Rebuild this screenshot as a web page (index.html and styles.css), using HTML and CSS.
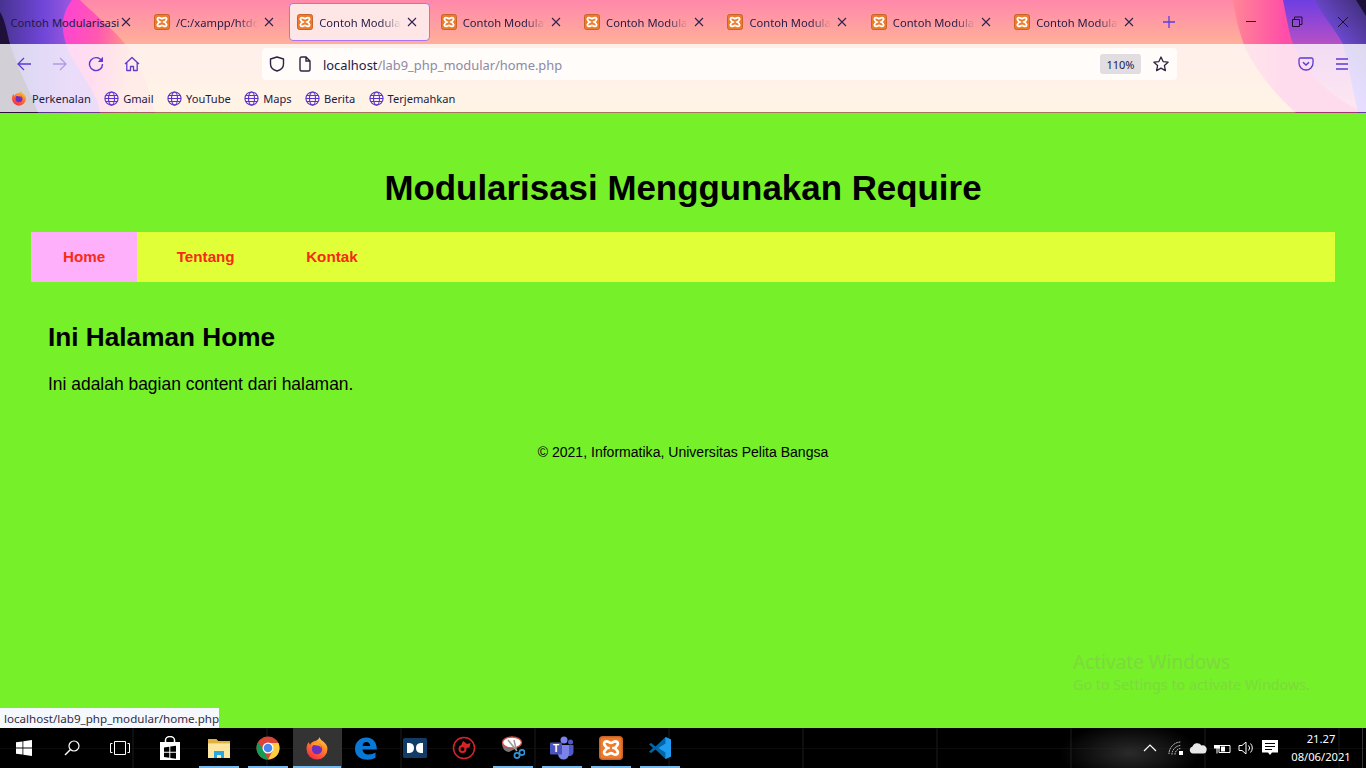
FILE: index.html
```html
<!DOCTYPE html>
<html lang="id">
<head>
<meta charset="utf-8">
<title>Contoh Modularisasi</title>
<link rel="stylesheet" href="styles.css">
</head>
<body>
<svg class="defs" width="0" height="0" aria-hidden="true">
  <defs>
    <symbol id="xampp" viewBox="0 0 16 16">
      <rect x=".5" y=".5" width="15" height="15" rx="2" fill="#ee7a2b" stroke="#c8632a"/>
      <path fill="none" stroke="#fff" stroke-width="1.800" d="M5 3.600C3.600 3.600 3 5 3.700 6 4.200 6.800 5.200 7.400 5.200 8S4.200 9.200 3.700 10C3 11 3.600 12.400 5 12.400 6.400 12.400 6.800 11.400 8 11.400s1.600 1 3 1c1.400 0 2-1.400 1.300-2.400-.5-.8-1.500-1.400-1.500-2s1-1.200 1.500-2C13 5 12.400 3.600 11 3.600 9.600 3.600 9.200 4.600 8 4.600S6.400 3.600 5 3.600Z"/>
      <path stroke="#fff" stroke-width="1.700" d="M5 8h2.200M8.800 8H11"/>
    </symbol>
    <symbol id="globe" viewBox="0 0 16 16">
      <g fill="none" stroke="#5b34d0" stroke-width="1.200">
        <circle cx="8" cy="8" r="7"/>
        <ellipse cx="8" cy="8" rx="3.200" ry="7"/>
        <path d="M1 8h14M1.800 4.800h12.400M1.800 11.200h12.400"/>
      </g>
    </symbol>
    <symbol id="close" viewBox="0 0 10 10">
      <path d="M1 1l8 8M9 1L1 9" stroke="#2c2350" stroke-width="1.100" fill="none"/>
    </symbol>
    <symbol id="firefox" viewBox="0 0 24 24">
      <defs>
        <linearGradient id="ffg" x1="0.800" y1="0" x2="0.200" y2="1">
          <stop offset="0" stop-color="#ffd23a"/>
          <stop offset=".45" stop-color="#ff7a2a"/>
          <stop offset="1" stop-color="#f0264e"/>
        </linearGradient>
      </defs>
      <path fill="url(#ffg)" d="M14.500 1c.6 2.200 2 3 3.500 4.300 2.700 2.200 4.500 4.500 4.500 7.700A10.500 10.500 0 0 1 1.500 13C1.500 9.500 2.500 7.500 4 6c0 1.200.5 2.200 1.200 2.800C6 6.500 8 5.500 10 5c2.200-.6 4-2 4.500-4Z"/>
      <circle cx="12" cy="13" r="5.200" fill="#6b2ec0"/>
      <path fill="#ff9a2e" d="M6 8c2 .5 3.500 1.500 6 1.500 3 0 4.500 2 4.500 4 .6-3.500-2-6.500-5-6.500-2 0-4 .2-5.500 1Z"/>
    </symbol>
  </defs>
</svg>

<header class="chrome">
  <svg class="chrome-art" viewBox="0 0 1366 113" width="1366" height="113" aria-hidden="true">
    <defs>
      <linearGradient id="base" x1="0" y1="0" x2="0" y2="1">
        <stop offset="0" stop-color="#ff88aa"/>
        <stop offset=".39" stop-color="#ffb09a"/>
        <stop offset="1" stop-color="#ffc47e"/>
      </linearGradient>
      <linearGradient id="lmag" gradientUnits="userSpaceOnUse" x1="60" y1="0" x2="135" y2="10">
        <stop offset="0" stop-color="#ff40d8"/>
        <stop offset=".55" stop-color="#ff58b0"/>
        <stop offset="1" stop-color="#ff9a86"/>
      </linearGradient>
      <linearGradient id="lpur" gradientUnits="userSpaceOnUse" x1="0" y1="0" x2="72" y2="0">
        <stop offset="0" stop-color="#473392"/>
        <stop offset=".6" stop-color="#7046d8"/>
        <stop offset="1" stop-color="#9a58e0"/>
      </linearGradient>
      <linearGradient id="rmag" gradientUnits="userSpaceOnUse" x1="1235" y1="0" x2="1285" y2="0">
        <stop offset="0" stop-color="#ff8496"/>
        <stop offset="1" stop-color="#ff4ea8"/>
      </linearGradient>
      <linearGradient id="rpur" gradientUnits="userSpaceOnUse" x1="0" y1="0" x2="0" y2="113">
        <stop offset="0" stop-color="#6e3ee2"/>
        <stop offset=".39" stop-color="#b650c6"/>
        <stop offset="1" stop-color="#ff88b8"/>
      </linearGradient>
      <linearGradient id="rvio" gradientUnits="userSpaceOnUse" x1="1318" y1="50" x2="1366" y2="10">
        <stop offset="0" stop-color="#8458ff"/>
        <stop offset="1" stop-color="#43307f"/>
      </linearGradient>
    </defs>
    <rect width="1366" height="113" fill="url(#base)"/>
    <path fill="url(#lmag)" d="M80 0C95 15 115 30 130 50 145 70 150 95 155 113H0V0Z"/>
    <path fill="url(#lpur)" d="M72 0C58 18 62 38 72 58 88 84 100 100 100 113H0V0Z"/>
    <path fill="#1e1038" d="M0 12C6 22 7 34 10 44 18 70 30 90 38 113H0Z"/>
    <path fill="url(#rmag)" d="M1233 0C1236 20 1240 35 1246 50 1262 80 1280 98 1296 113H1366V0Z"/>
    <path fill="url(#rpur)" d="M1283 0C1288 25 1290 40 1296 50 1312 80 1335 100 1366 113V0Z"/>
    <path fill="url(#rvio)" d="M1315 0C1322 15 1334 28 1343 44 1349 68 1354 95 1358 113H1366V0Z"/>
    <path fill="#1d1038" d="M1356 0L1366 16V0Z"/>
  </svg>

  <div class="tabs">
    <div class="tab tab-first">
      <span class="tab-title tab-title-full">Contoh Modularisasi</span>
      <svg class="tab-close"><use href="#close"/></svg>
    </div>
    <div class="tab">
      <svg class="tab-icon"><use href="#xampp"/></svg>
      <span class="tab-title">/C:/xampp/htdocs/lab9_php_modular/home.php</span>
      <svg class="tab-close"><use href="#close"/></svg>
    </div>
    <div class="tab tab-active">
      <svg class="tab-icon"><use href="#xampp"/></svg>
      <span class="tab-title">Contoh Modularisasi</span>
      <svg class="tab-close"><use href="#close"/></svg>
    </div>
    <div class="tab">
      <svg class="tab-icon"><use href="#xampp"/></svg>
      <span class="tab-title">Contoh Modularisasi</span>
      <svg class="tab-close"><use href="#close"/></svg>
    </div>
    <div class="tab">
      <svg class="tab-icon"><use href="#xampp"/></svg>
      <span class="tab-title">Contoh Modularisasi</span>
      <svg class="tab-close"><use href="#close"/></svg>
    </div>
    <div class="tab">
      <svg class="tab-icon"><use href="#xampp"/></svg>
      <span class="tab-title">Contoh Modularisasi</span>
      <svg class="tab-close"><use href="#close"/></svg>
    </div>
    <div class="tab">
      <svg class="tab-icon"><use href="#xampp"/></svg>
      <span class="tab-title">Contoh Modularisasi</span>
      <svg class="tab-close"><use href="#close"/></svg>
    </div>
    <div class="tab">
      <svg class="tab-icon"><use href="#xampp"/></svg>
      <span class="tab-title">Contoh Modularisasi</span>
      <svg class="tab-close"><use href="#close"/></svg>
    </div>
    <svg class="new-tab" viewBox="0 0 12 12"><path d="M6 0v12M0 6h12" stroke="#5a3fe0" stroke-width="1.300" fill="none"/></svg>
    <div class="win-controls">
      <svg class="win-btn" viewBox="0 0 46 44"><path d="M18 21.500h10" stroke="#1c1230" stroke-width="1"/></svg>
      <svg class="win-btn" viewBox="0 0 46 44"><path d="M18.500 19.500h7v7h-7zM20.500 19.500v-2.500h7.500v7.500h-2.500" stroke="#1c1230" stroke-width="1" fill="none"/></svg>
      <svg class="win-btn" viewBox="0 0 46 44"><path d="M18 17l10 10M28 17L18 27" stroke="#1c1230" stroke-width="1" fill="none"/></svg>
    </div>
  </div>

  <div class="toolbars">
    <div class="navbar">
      <svg class="tool" viewBox="0 0 16 16"><path d="M15 8H2M8 2L2 8l6 6" fill="none" stroke="#5b3bd2" stroke-width="1.300"/></svg>
      <svg class="tool tool-off" viewBox="0 0 16 16"><path d="M1 8h13M8 2l6 6-6 6" fill="none" stroke="#5b3bd2" stroke-width="1.300"/></svg>
      <svg class="tool" viewBox="0 0 16 16"><path d="M13.600 4.800A6.500 6.500 0 1 0 14.500 8" fill="none" stroke="#5b3bd2" stroke-width="1.400"/><path d="M15 0.800V6H9.800Z" fill="#5b3bd2"/></svg>
      <svg class="tool" viewBox="0 0 16 16"><path d="M1 8l7-6.500L15 8M2.800 6.500V14.500h3.700v-4h3v4h3.700V6.500" fill="none" stroke="#5b3bd2" stroke-width="1.300" stroke-linejoin="round"/></svg>
      <div class="urlbar">
        <svg class="url-icon" viewBox="0 0 16 16"><path d="M8 1l6.500 2v5c0 3.500-3 6-6.500 7-3.500-1-6.500-3.500-6.500-7V3Z" fill="none" stroke="#2b2545" stroke-width="1.400" stroke-linejoin="round"/></svg>
        <svg class="url-icon url-icon-page" viewBox="0 0 16 16"><path d="M3 2.500A1.500 1.500 0 0 1 4.500 1H9l4 4v8.500A1.500 1.500 0 0 1 11.500 15h-7A1.500 1.500 0 0 1 3 13.500ZM9 1v4h4" fill="none" stroke="#2b2545" stroke-width="1.400"/></svg>
        <span class="url-text"><span class="url-host">localhost</span>/lab9_php_modular/home.php</span>
        <span class="zoom-pill">110%</span>
        <svg class="url-star" viewBox="0 0 16 16"><path d="M8 1l2.100 4.600 5 .6-3.700 3.400 1 5L8 12.100 3.600 14.600l1-5L.9 6.200l5-.6Z" fill="none" stroke="#2b2545" stroke-width="1.300" stroke-linejoin="round"/></svg>
      </div>
      <svg class="tool tool-pocket" viewBox="0 0 16 16"><path d="M2.300 2h11.400A1.300 1.300 0 0 1 15 3.300V7A7 7 0 0 1 1 7V3.300A1.300 1.300 0 0 1 2.300 2Z" fill="none" stroke="#5b3bd2" stroke-width="1.300"/><path d="M5 6.200l3 2.800 3-2.800" fill="none" stroke="#5b3bd2" stroke-width="1.500"/></svg>
      <svg class="tool tool-menu" viewBox="0 0 16 16"><path d="M2 3h12M2 8h12M2 13h12" stroke="#5b3bd2" stroke-width="1.300"/></svg>
    </div>
    <nav class="bookmarks">
      <span class="bm bm-first"><svg class="bm-icon"><use href="#firefox"/></svg>Perkenalan</span>
      <span class="bm"><svg class="bm-icon"><use href="#globe"/></svg>Gmail</span>
      <span class="bm"><svg class="bm-icon"><use href="#globe"/></svg>YouTube</span>
      <span class="bm"><svg class="bm-icon"><use href="#globe"/></svg>Maps</span>
      <span class="bm"><svg class="bm-icon"><use href="#globe"/></svg>Berita</span>
      <span class="bm"><svg class="bm-icon"><use href="#globe"/></svg>Terjemahkan</span>
    </nav>
  </div>
  <div class="chrome-line"></div>
</header>

<main class="viewport">
  <div class="page">
    <h1 class="page-title">Modularisasi Menggunakan Require</h1>
    <nav class="menu">
      <a class="menu-item menu-active" href="#">Home</a>
      <a class="menu-item" href="#">Tentang</a>
      <a class="menu-item" href="#">Kontak</a>
    </nav>
    <section class="content">
      <h2 class="content-title">Ini Halaman Home</h2>
      <p class="content-text">Ini adalah bagian content dari halaman.</p>
    </section>
    <footer class="page-footer">© 2021, Informatika, Universitas Pelita Bangsa</footer>
  </div>
  <div class="status">localhost/lab9_php_modular/home.php</div>
  <div class="watermark">
    <div class="wm-title">Activate Windows</div>
    <div class="wm-sub">Go to Settings to activate Windows.</div>
  </div>
</main>

<footer class="taskbar">
  <div class="tb-btn">
    <svg class="tb-sm" viewBox="0 0 16 16"><path fill="#fff" d="M0 2.300l6.500-.9v6.200H0ZM7.300 1.300L16 0v7.600H7.300ZM0 8.400h6.500v6.200L0 13.700ZM7.300 8.400H16V16l-8.700-1.300Z"/></svg>
  </div>
  <div class="tb-btn">
    <svg class="tb-sm" viewBox="0 0 16 16"><circle cx="10" cy="6" r="5" fill="none" stroke="#fff" stroke-width="1.200"/><path d="M6.500 9.500L1 15" stroke="#fff" stroke-width="1.500"/></svg>
  </div>
  <div class="tb-btn">
    <svg class="tb-task" viewBox="0 0 20 14"><path d="M4.500 .5h11v13h-11zM2.500 2.500H.5v9h2M17.500 2.500h2v9h-2" fill="none" stroke="#fff" stroke-width="1"/></svg>
  </div>
  <div class="tb-btn tb-store">
    <svg class="tb-lg" viewBox="0 0 24 24"><path fill="#fff" d="M2 6h20v18H2Z"/><path d="M7.500 8V4a4.500 3.500 0 0 1 9 0v4" fill="none" stroke="#fff" stroke-width="1.500"/><path fill="#000" d="M6 11.500l5.300-.8v5H6ZM12.300 10.500l5.700-.8v6h-5.700ZM6 16.700h5.300v5L6 21ZM12.300 16.700H18v6l-5.700-.8Z"/></svg>
  </div>
  <div class="tb-btn tb-open">
    <svg class="tb-lg" viewBox="0 0 24 24"><path fill="#f6d26b" d="M1 3h8l2 2h12v17H1Z"/><path fill="#fbe7a0" d="M1 8h22v14H1Z"/><path fill="#2aa7e0" d="M7 15h10v7h-3v-3h-4v3H7Z"/><path fill="#e0b13f" d="M1 3h8l2 2h12v2H1Z"/></svg>
  </div>
  <div class="tb-btn tb-open">
    <svg class="tb-lg" viewBox="0 0 24 24"><circle cx="12" cy="12" r="11.500" fill="#db4437"/><path fill="#0f9d58" d="M12 23.500A11.500 11.500 0 0 1 2 6.300L7.500 14l4.500 9.500Z"/><path fill="#ffcd40" d="M12 23.500A11.500 11.500 0 0 0 22.400 7H12l4.500 8Z"/><circle cx="12" cy="12" r="5.500" fill="#fff"/><circle cx="12" cy="12" r="4.300" fill="#4688f1"/></svg>
  </div>
  <div class="tb-btn tb-active">
    <svg class="tb-lg"><use href="#firefox"/></svg>
  </div>
  <div class="tb-btn">
    <svg class="tb-lg" viewBox="0 0 24 24"><path fill="#0a78d7" d="M1 13C1 6 6 1.500 12.500 1.500 19 1.500 23 6.500 22.800 13.500H8.500c.2 3.500 3 5 6 5 2.800 0 5-.7 7-2v5.200c-2 1.300-4.800 2-8 2C6 23.700 1 19.500 1 13Zm7.500-3h7.800C16 7.500 14.500 6 12.300 6S8.800 7.500 8.500 10Z"/></svg>
  </div>
  <div class="tb-btn">
    <svg class="tb-dolby" viewBox="0 0 24 20"><rect width="24" height="20" rx="1.500" fill="#123c68"/><path fill="#fff" d="M4 5h2.500a5 5 0 0 1 4.500 5 5 5 0 0 1-4.500 5H4ZM20 5h-2.500a5 5 0 0 0-4.500 5 5 5 0 0 0 4.500 5H20Z"/></svg>
  </div>
  <div class="tb-btn">
    <svg class="tb-lg" viewBox="0 0 24 24"><circle cx="12" cy="12" r="10.500" fill="none" stroke="#d8232a" stroke-width="1.500"/><circle cx="10.500" cy="13" r="3" fill="none" stroke="#d8232a" stroke-width="2"/><path fill="#d8232a" d="M11 5l4 3 3.500-1-1 4.500-3 .5-2-2.500-4 1.500Z"/></svg>
  </div>
  <div class="tb-btn tb-open">
    <svg class="tb-lg" viewBox="0 0 24 24"><path fill="#777" d="M1 7c0 5 3 9 7 9l6-3L4 3Z"/><ellipse cx="11" cy="6.500" rx="9.500" ry="5.500" fill="#fff" stroke="#d94a4a" stroke-width="1.300"/><path d="M7 4l9 11M13 4l2.500 11" stroke="#9a9a9a" stroke-width="1.500"/><circle cx="16" cy="19.500" r="2.600" fill="none" stroke="#2f95d8" stroke-width="1.700"/><circle cx="21" cy="16.500" r="2.600" fill="none" stroke="#2f95d8" stroke-width="1.700"/></svg>
  </div>
  <div class="tb-btn tb-open">
    <svg class="tb-lg" viewBox="0 0 24 24"><circle cx="14" cy="4" r="3.500" fill="#7b83eb"/><circle cx="20.500" cy="6" r="2.500" fill="#5059c9"/><path fill="#5059c9" d="M16 9h7.500v7a4 4 0 0 1-6 3.500Z"/><path fill="#7b83eb" d="M8 9h11v9a5.500 5.500 0 0 1-11 0Z"/><rect y="6.500" width="12" height="12" rx="1" fill="#4b53bc"/><text x="6" y="16" class="teams-t">T</text></svg>
  </div>
  <div class="tb-btn tb-open">
    <svg class="tb-lg"><use href="#xampp"/></svg>
  </div>
  <div class="tb-btn tb-open">
    <svg class="tb-lg" viewBox="0 0 24 24"><path fill="#0065a9" d="M1 8.300L3 7l4.500 3.500L17.500 1 23 3.500v17L17.500 23 7.500 13.500 3 17l-2-1.300L5 12Z"/><path fill="#1f9cf0" d="M17.500 1L23 3.500v17L17.500 23ZM17.500 7.500L10.500 12l7 4.500Z"/></svg>
  </div>

  <div class="tray">
    <svg class="tray-icon" viewBox="0 0 16 16"><path d="M2 11l6-6 6 6" fill="none" stroke="#fff" stroke-width="1.200"/></svg>
    <svg class="tray-icon tray-wifi" viewBox="0 0 16 16"><path d="M1 14A12 12 0 0 1 13 2M4 14.500A9 9 0 0 1 13 5.500M7 14.500A6 6 0 0 1 13 8.500" fill="none" stroke="#ddd" stroke-width="1" stroke-dasharray="1.500 .8"/><rect x="11" y="11" width="4" height="4" fill="#fff"/></svg>
    <svg class="tray-icon tray-wide" viewBox="0 0 18 12"><path fill="#e8e8e8" d="M4 11.500A3.500 3.500 0 0 1 3.500 4.600 5 5 0 0 1 12.500 3.500 4 4 0 0 1 17.500 8.500 3 3 0 0 1 15 11.500Z"/></svg>
    <svg class="tray-icon tray-wide" viewBox="0 0 18 12"><path d="M6 3.500h11v7H6z" fill="none" stroke="#fff"/><path fill="#fff" d="M8 4.500h4v5H8ZM1 3h6v3.500H1ZM2.500 0v3M5.500 0v3M3.500 6.500h1v5h-1Z"/></svg>
    <svg class="tray-icon" viewBox="0 0 16 16"><path d="M1 5.500h3L8 2v12L4 10.500H1ZM10.500 5.500a3.500 3.500 0 0 1 0 5M12.500 3.500a6.500 6.500 0 0 1 0 9" fill="none" stroke="#fff"/></svg>
    <svg class="tray-icon" viewBox="0 0 16 16"><path fill="#fff" d="M0 0h16v12.500h-6L8 15l-2-2.500H0Z"/><path d="M3 3.500h10M3 6.500h10M3 9.500h7" stroke="#000"/></svg>
    <div class="clock"><span>21.27</span><span>08/06/2021</span></div>
    <span class="show-desktop"></span>
  </div>
</footer>
</body>
</html>
```

FILE: styles.css
```css
* { box-sizing: border-box; }
html, body { margin: 0; padding: 0; }
body {
  width: 1366px;
  height: 768px;
  overflow: hidden;
  display: flex;
  flex-direction: column;
  background: #76f029;
  font-family: "Liberation Sans", Arial, sans-serif;
  color: #000;
}
.defs { position: absolute; }

/* browser chrome */
.chrome {
  position: relative;
  height: 113px;
  flex: none;
  font-family: "Noto Sans", "Open Sans", sans-serif;
  color: #211a45;
}
.chrome-art { position: absolute; left: 0; top: 0; display: block; }
.tabs {
  position: relative;
  height: 44px;
  display: flex;
  align-items: center;
  padding-left: 2.5px;
}
.tab {
  width: 141px;
  height: 38px;
  margin-right: 2.4px;
  padding: 0 5px 0 8px;
  display: flex;
  align-items: center;
  border: 1px solid transparent;
  border-radius: 4px;
  flex: none;
  font-size: 11.2px;
}
.tab-first { padding-left: 7px; }
.tab-active {
  background: #ffe6e6;
  border-color: #a874f2;
}
.tab-icon { width: 16px; height: 16px; flex: none; margin-right: 6px; margin-left: -1px; }
.tab-title {
  flex: 1;
  min-width: 0;
  white-space: nowrap;
  overflow: hidden;
  -webkit-mask-image: linear-gradient(to right, #000 75%, transparent 100%);
  mask-image: linear-gradient(to right, #000 75%, transparent 100%);
}
.tab-title-full { -webkit-mask-image: none; mask-image: none; overflow: visible; }
.tab-close { width: 10px; height: 10px; flex: none; margin-left: 6px; margin-right: 7px; }
.tab-first .tab-close { margin-left: 0; }
.new-tab { width: 12px; height: 12px; margin-left: 13px; flex: none; }
.win-controls { display: flex; margin-left: auto; height: 44px; }
.win-btn { width: 46px; height: 44px; display: block; }

.toolbars {
  position: relative;
  height: 68px;
  background: rgba(255, 255, 255, .8);
}
.navbar {
  height: 40px;
  display: flex;
  align-items: center;
  padding-left: 16px;
  gap: 20px;
}
.tool { width: 16px; height: 16px; flex: none; display: block; }
.tool-off { opacity: .4; }
.tool-pocket { margin-left: 92px; }
.urlbar {
  width: 915px;
  height: 32px;
  margin-left: 102px;
  margin-right: 9px;
  background: #fffcf9;
  border-radius: 4px;
  display: flex;
  align-items: center;
  padding: 0 8px 0 7px;
  font-size: 12.9px;
  flex: none;
}
.url-icon { width: 16px; height: 16px; flex: none; margin-right: 12px; }
.url-icon-page { margin-right: 10px; }
.url-text { color: #8c8aa6; white-space: nowrap; flex: 1; padding-top: 2px; }
.url-host { color: #211a45; }
.zoom-pill {
  width: 41px;
  height: 20px;
  background: #e1dde1;
  border-radius: 3px;
  font-size: 11px;
  line-height: 21px;
  text-align: center;
  margin-right: 12px;
}
.url-star { width: 16px; height: 16px; flex: none; }
.bookmarks {
  height: 28px;
  display: flex;
  align-items: center;
  padding-left: 11px;
  gap: 13.4px;
  font-size: 11.1px;
}
.bm { display: flex; align-items: center; gap: 4px; white-space: nowrap; }
.bm-icon { width: 15px; height: 15px; flex: none; }
.bm-first { gap: 5px; }
.bm-first .bm-icon { width: 16px; height: 16px; }
.chrome-line { position: relative; height: 1px; background: rgba(60, 20, 60, .45); }

/* page */
.viewport { position: relative; flex: 1; min-height: 0; }
.page { padding: 55px 31px 0; }
.page-title {
  margin: 0 0 24px;
  font-size: 34.9px;
  line-height: 40px;
  font-weight: 700;
  text-align: center;
}
.menu {
  height: 50px;
  background: #e0ff37;
  display: flex;
  gap: 7.5px;
}
.menu-item {
  padding: 0 32px;
  font-size: 15.2px;
  font-weight: 700;
  line-height: 50px;
  color: #f72a16;
  text-decoration: none;
}
.menu-active { background: #ffb0fa; }
.content { padding: 40px 17px 0; }
.content-title { margin: 0 0 22px; font-size: 26.2px; line-height: 30px; font-weight: 700; }
.content-text { margin: 0; font-size: 17.45px; line-height: 20px; }
.page-footer { margin-top: 50px; text-align: center; font-size: 14.05px; line-height: 16px; }

.status {
  position: absolute;
  left: 0;
  bottom: 0;
  width: 219px;
  height: 20px;
  padding-left: 4px;
  background: #f5f8fd;
  font-family: "Noto Sans", sans-serif;
  font-size: 11.6px;
  line-height: 21px;
  color: #2e2c46;
  white-space: nowrap;
}
.watermark {
  position: absolute;
  left: 1073px;
  top: 537px;
  color: #7dd93d;
  font-family: "Noto Sans", sans-serif;
  white-space: nowrap;
}
.wm-title { font-size: 19px; line-height: 25px; }
.wm-sub { font-size: 14.3px; line-height: 19px; }

/* taskbar */
.taskbar {
  height: 40px;
  flex: none;
  display: flex;
  color: #fff;
  font-family: "Noto Sans", sans-serif;
  background:
    radial-gradient(ellipse 70px 30px at 1130px 25px, #2a2a2a, transparent),
    repeating-linear-gradient(to right, transparent 0 132px, #0e0e0e 132px 134px),
    linear-gradient(to bottom, #000 0 20px, #0c0c0c 20px 21px, #000 21px);
}
.tb-btn {
  width: 48px;
  flex: none;
  display: flex;
  align-items: center;
  justify-content: center;
}
.tb-btn:nth-child(n+4) { width: 49px; }
.tb-store { margin-left: 1.5px; }
.tb-open {
  background: linear-gradient(#76b9ed, #76b9ed) center bottom / 40px 2px no-repeat;
}
.tb-active {
  background:
    linear-gradient(#76b9ed, #76b9ed) center bottom / 48px 2px no-repeat,
    #333;
}
.tb-sm { width: 16px; height: 16px; }
.tb-task { width: 20px; height: 14px; }
.tb-lg { width: 24px; height: 24px; }
.tb-dolby { width: 24px; height: 20px; }
.teams-t { font: 700 10px "Liberation Sans", sans-serif; fill: #fff; text-anchor: middle; }

.tray {
  margin-left: auto;
  display: flex;
  align-items: center;
  height: 40px;
}
.tray-icon { width: 16px; height: 16px; margin: 0 4px; flex: none; }
.tray-wifi { margin: 0 2px 0 6px; }
.tray-wide { width: 18px; height: 12px; margin: 0 3px; }
.clock {
  width: 78px;
  display: flex;
  flex-direction: column;
  align-items: center;
  line-height: 18px;
  color: #fff;
  font-size: 11.2px;
}
.show-desktop { width: 1px; height: 40px; margin: 0 3px 0 2px; background: #333; }
```
